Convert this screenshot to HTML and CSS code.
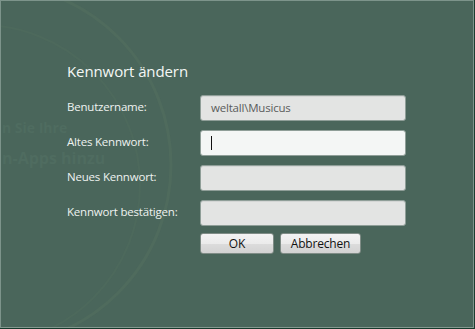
FILE: index.html
```html
<!DOCTYPE html>
<html lang="de">
<head>
<meta charset="utf-8">
<link rel="stylesheet" href="styles.css">
</head>
<body>
<div class="frame">
  <div class="window">
    <svg class="swirl" width="475" height="329" viewBox="0 0 475 329">
      <circle cx="-10" cy="165" r="181" fill="none" stroke="#54705f" stroke-width="3" opacity="0.55"/>
      <circle cx="-20" cy="185" r="160" fill="none" stroke="#52705f" stroke-width="2" opacity="0.35"/>
    </svg>
    <div class="ghost ghost1">n Sie Ihre</div>
    <div class="ghost ghost2">n-Apps hinzu</div>
    <div class="dialog">
      <h1 class="title">Kennwort ändern</h1>
      <div class="form">
        <label class="label">Benutzername:</label>
        <div class="field">weltall\Musicus</div>
        <label class="label">Altes Kennwort:</label>
        <div class="field focused"><span class="caret"></span></div>
        <label class="label">Neues Kennwort:</label>
        <div class="field"></div>
        <label class="label">Kennwort bestätigen:</label>
        <div class="field"></div>
        <div class="buttons">
          <button class="btn btn-ok">OK</button>
          <button class="btn btn-cancel">Abbrechen</button>
        </div>
      </div>
    </div>
  </div>
</div>
</body>
</html>
```
FILE: styles.css
```css
html, body {
  margin: 0;
  padding: 0;
  background: #4a665b;
}
.frame {
  width: 475px;
  height: 329px;
  box-sizing: border-box;
  border-right: 1px solid #1c3d30;
  border-bottom: 1px solid #163a2c;
}
.window {
  position: relative;
  width: 474px;
  height: 328px;
  box-sizing: border-box;
  border: 1px solid #7d948b;
  border-bottom-color: #84998f;
  background: #4a665b;
  overflow: hidden;
  font-family: "Open Sans", "Noto Sans", sans-serif;
}
.swirl {
  position: absolute;
  left: -1px;
  top: -1px;
}
.ghost {
  position: absolute;
  left: 1px;
  color: #4f6c60;
  font-weight: 700;
  white-space: nowrap;
  line-height: 1;
}
.ghost1 {
  top: 120px;
  font-size: 14px;
}
.ghost2 {
  top: 149px;
  font-size: 16px;
}
.dialog {
  position: relative;
  padding: 59px 0 0 66px;
}
.title {
  margin: 0 0 13px 0;
  font-weight: 400;
  font-size: 15px;
  line-height: 22px;
  color: #f4f7f5;
  letter-spacing: -0.1px;
}
.form {
  display: grid;
  grid-template-columns: 133px 206px;
  row-gap: 9px;
  align-items: center;
}
.label {
  color: #eef2f0;
  font-size: 11.5px;
  letter-spacing: -0.2px;
  line-height: 14px;
  margin-top: -3px;
}
.field {
  height: 26px;
  box-sizing: border-box;
  border: 1px solid #8f9e98;
  border-radius: 3px;
  background: #e3e4e3;
  box-shadow: inset 0 1px 0 #d4d6d5;
  font-size: 11.5px;
  letter-spacing: -0.2px;
  color: #5a5c5b;
  padding: 4px 0 0 10px;
  line-height: 16px;
}
.field.focused {
  background: #f4f6f5;
  box-shadow: none;
}
.caret {
  display: inline-block;
  width: 1px;
  height: 14px;
  background: #111;
  margin-top: 1px;
}
.buttons {
  grid-column: 2;
  display: flex;
  gap: 6px;
  margin-top: -2px;
}
.btn {
  height: 21px;
  box-sizing: border-box;
  border: 1px solid #7f8c86;
  border-radius: 3px;
  background: linear-gradient(#f3f3f3, #ebebeb 50%, #dcdcdc 51%, #d2d2d2);
  font-family: "Open Sans", "Noto Sans", sans-serif;
  font-size: 12px;
  letter-spacing: -0.2px;
  color: #111;
  padding: 0;
  line-height: 18px;
}
.btn-ok {
  width: 74px;
}
.btn-cancel {
  width: 81px;
}
```
